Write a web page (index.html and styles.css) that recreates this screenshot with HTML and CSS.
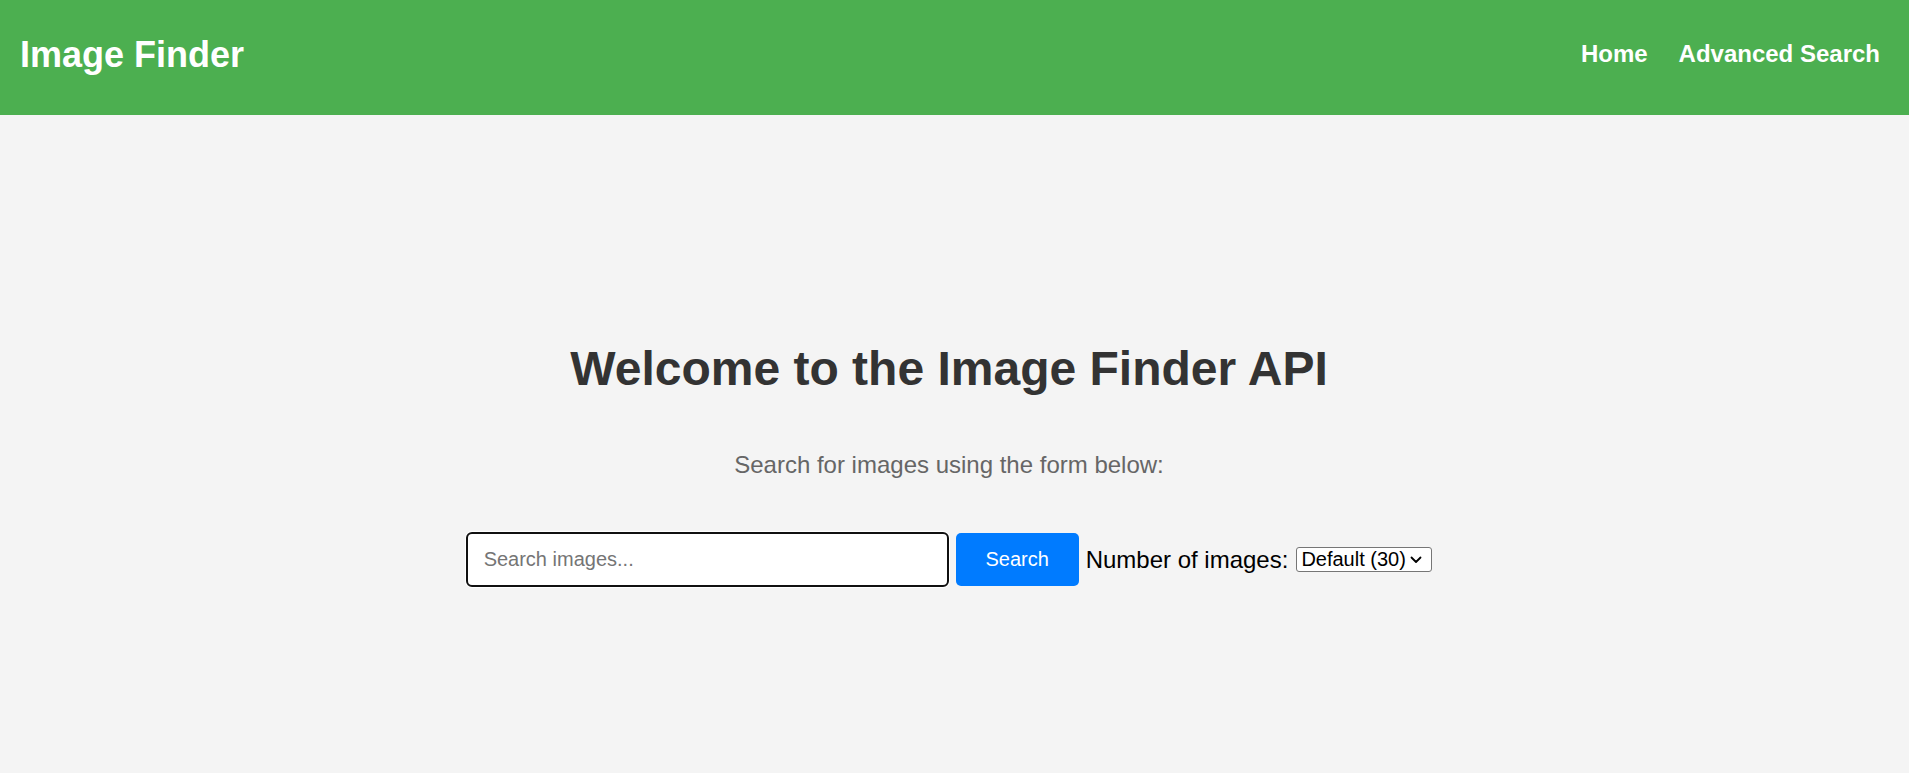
FILE: index.html
```html
<!DOCTYPE html>
<html lang="en">
<head>
<meta charset="utf-8">
<title>Image Finder</title>
<link rel="stylesheet" href="styles.css">
</head>
<body>
<header class="topbar">
  <div class="brand">Image Finder</div>
  <nav class="nav">
    <a class="nav-link" href="#">Home</a>
    <a class="nav-link" href="#">Advanced Search</a>
  </nav>
</header>
<main class="main">
  <h1 class="headline">Welcome to the Image Finder API</h1>
  <p class="lead">Search for images using the form below:</p>
  <form class="search-form">
    <input class="search-input" type="text" placeholder="Search images..." autofocus>
    <button class="search-btn" type="button">Search</button>
    <label class="count-label" for="count">Number of images:</label>
    <span class="select-wrap">
      <select class="count-select" id="count">
        <option>Default (30)</option>
        <option>10</option>
        <option>50</option>
      </select>
      <svg class="chevron" width="12" height="8" viewBox="0 0 12 8" aria-hidden="true"><path d="M1.5 1.5 L6 6 L10.5 1.5" fill="none" stroke="#000" stroke-width="1.8" stroke-linecap="round" stroke-linejoin="round"/></svg>
    </span>
  </form>
</main>
</body>
</html>
```

FILE: styles.css
```css
* { box-sizing: border-box; }

html, body {
  margin: 0;
  padding: 0;
}

body {
  background: #f4f4f4;
  font-family: "Liberation Sans", Arial, sans-serif;
  min-height: 773px;
}

.topbar {
  height: 115px;
  background: #4caf50;
  display: flex;
  align-items: center;
  justify-content: space-between;
  padding: 0 29px 7px 20px;
}

.brand {
  color: #fff;
  font-size: 36px;
  font-weight: bold;
  line-height: 41px;
}

.nav {
  display: flex;
  gap: 31px;
}

.nav-link {
  color: #fff;
  font-size: 24px;
  font-weight: bold;
  line-height: 28px;
  text-decoration: none;
}

.main {
  padding: 226px 11px 0 0;
  display: flex;
  flex-direction: column;
  align-items: center;
}

.headline {
  margin: 0;
  font-size: 48px;
  line-height: 55px;
  font-weight: bold;
  color: #333;
}

.lead {
  margin: 55px 0 0;
  font-size: 24px;
  line-height: 28px;
  color: #666;
}

.search-form {
  margin-top: 53px;
  display: flex;
  align-items: center;
  gap: 7px;
}

.search-input {
  width: 483px;
  height: 55px;
  border: 2px solid #101010;
  border-radius: 6px;
  box-shadow: 0 0 0 1px #fff;
  padding: 0 16px;
  font-family: "Liberation Sans", Arial, sans-serif;
  font-size: 20px;
  color: #000;
  background: #fff;
  outline: none;
  caret-color: #000;
}

.search-input::placeholder {
  color: #757575;
}

.search-btn {
  width: 123px;
  height: 53px;
  border: none;
  border-radius: 5px;
  background: #007bff;
  color: #fff;
  font-family: "Liberation Sans", Arial, sans-serif;
  font-size: 20px;
  padding: 0;
}

.count-label {
  font-size: 24px;
  line-height: 28px;
  color: #000;
  margin-right: 1px;
}

.select-wrap {
  position: relative;
  display: inline-flex;
}

.count-select {
  -webkit-appearance: none;
  appearance: none;
  width: 136px;
  height: 25px;
  border: 1px solid #767676;
  border-radius: 3px;
  background: #fff;
  padding: 0 0 0 4px;
  font-family: "Liberation Sans", Arial, sans-serif;
  font-size: 20px;
  line-height: 23px;
  color: #000;
}

.chevron {
  position: absolute;
  right: 10px;
  top: 9px;
  pointer-events: none;
}
```
